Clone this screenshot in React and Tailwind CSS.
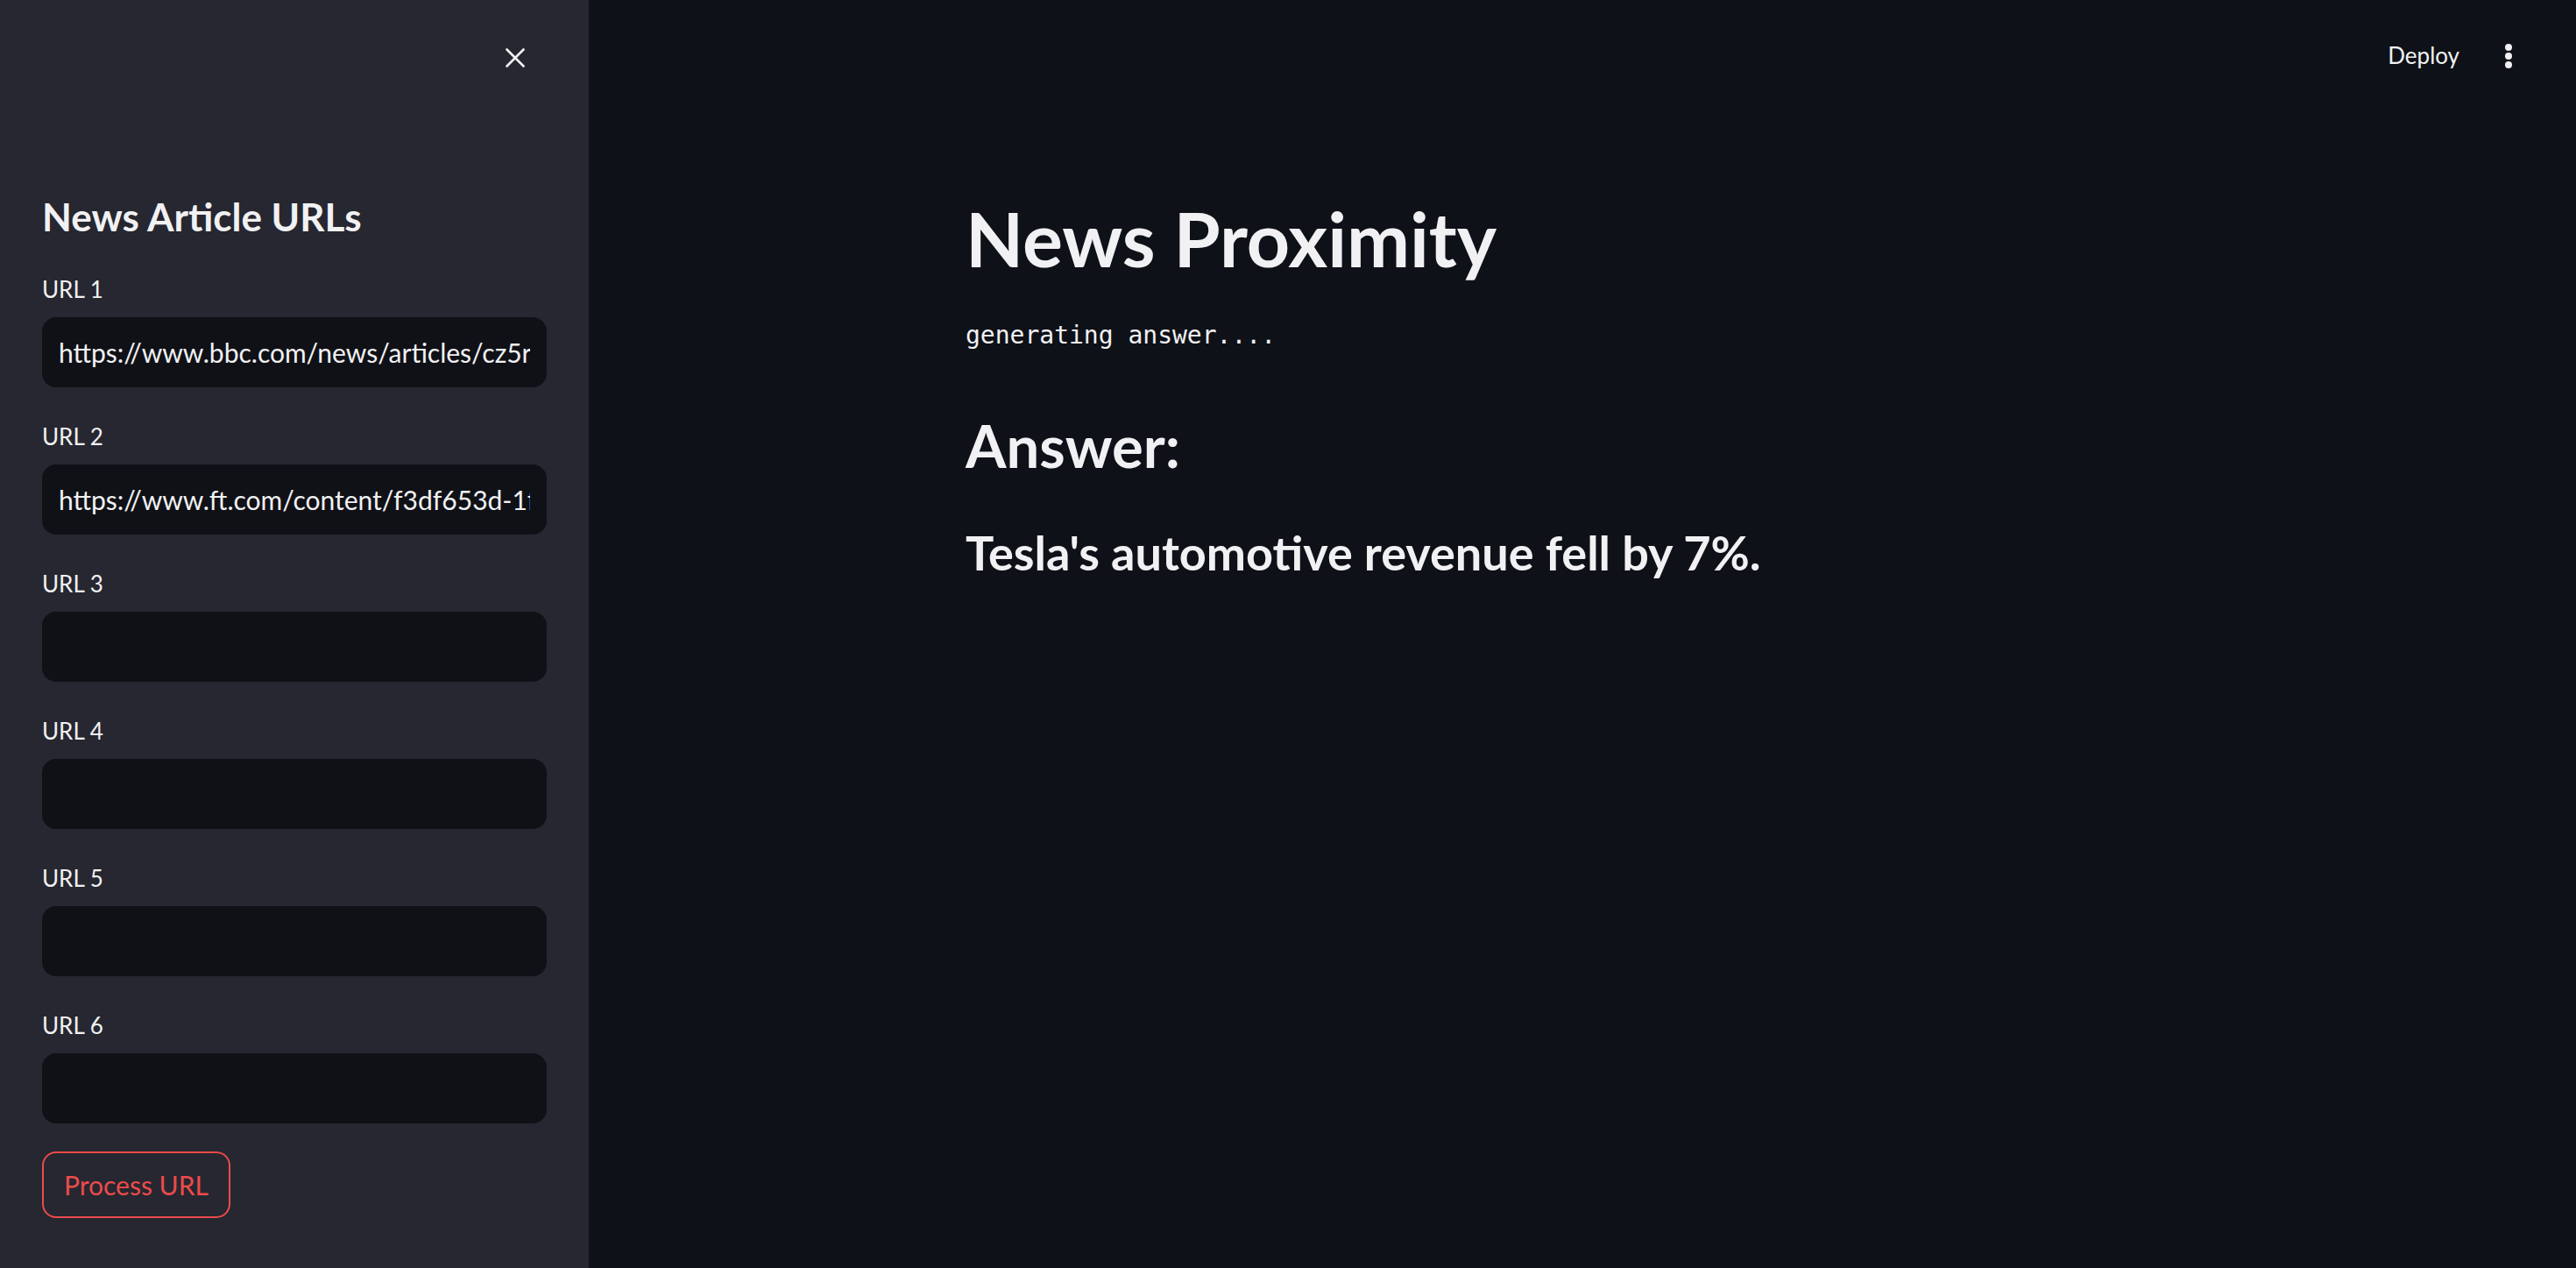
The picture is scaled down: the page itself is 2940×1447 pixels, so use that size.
import React from "react";

const sans = { fontFamily: "Lato, 'Liberation Sans', sans-serif" };

function UrlField({ label, value }) {
  return (
    <div className="flex flex-col">
      <div className="h-[32px] leading-[32px] text-[26px] text-[#f1f1f3]">{label}</div>
      <div className="mt-[16px] h-[80px] rounded-[16px] bg-[#101117] flex items-center px-[19px] overflow-hidden">
        <input
          readOnly
          value={value}
          className="w-full bg-transparent outline-none border-0 text-[30px] text-[#f1f1f3] p-0"
          style={sans}
        />
      </div>
    </div>
  );
}

export default function App() {
  const urls = [
    "https://www.bbc.com/news/articles/cz5rnd4vn9xo",
    "https://www.ft.com/content/f3df653d-1f0b-4e5b-8a55-2c4d7b1a9e61",
    "",
    "",
    "",
    "",
  ];
  return (
    <div className="flex h-screen w-full overflow-hidden bg-[#0e1117]" style={sans}>
      <aside className="w-[672px] shrink-0 bg-[#262730] flex flex-col px-[48px]">
        <div className="pt-[44px] h-[88px] flex justify-end -mr-[48px] pr-[62px]">
          <div className="w-[44px] h-[44px] flex items-center justify-center">
            <svg width="22" height="22" viewBox="0 0 22 22">
              <path d="M1.5 1.5 L20.5 20.5 M20.5 1.5 L1.5 20.5" stroke="#f1f1f3" strokeWidth="2.6" strokeLinecap="round" />
            </svg>
          </div>
        </div>
        <h2 className="mt-[130px] h-[58px] leading-[58px] text-[44px] font-bold text-[#f1f1f3]">News Article URLs</h2>
        <div className="mt-[38px] flex flex-col gap-[40px]">
          {urls.map((u, i) => (
            <UrlField key={i} label={`URL ${i + 1}`} value={u} />
          ))}
        </div>
        <div className="mt-[32px]">
          <button className="h-[76px] px-[23px] rounded-[16px] border-2 border-[#ec4b4b] text-[#ec4b4b] text-[30px] bg-transparent" style={sans}>
            Process URL
          </button>
        </div>
      </aside>
      <main className="flex-1 flex flex-col">
        <div className="h-[127px] flex items-center justify-end pr-[57px]">
          <span className="text-[26px] text-[#f1f1f3] mr-[36px]">Deploy</span>
          <div className="w-[40px] h-[40px] flex items-center justify-center">
            <svg width="10" height="30" viewBox="0 0 10 30">
              <circle cx="5" cy="5" r="4" fill="#f1f1f3" />
              <circle cx="5" cy="15" r="4" fill="#f1f1f3" />
              <circle cx="5" cy="25" r="4" fill="#f1f1f3" />
            </svg>
          </div>
        </div>
        <div className="w-[1472px] mx-auto px-[32px] flex flex-col">
          <h1 className="mt-[93px] h-[104px] leading-[104px] text-[86px] font-bold text-[#f1f1f3]">News Proximity</h1>
          <div
            className="mt-[39px] h-[40px] leading-[40px] text-[28px] text-[#f1f1f3]"
            style={{ fontFamily: "'DejaVu Sans Mono', 'Liberation Mono', monospace" }}
          >
            generating answer....
          </div>
          <h2 className="mt-[65px] h-[80px] leading-[80px] text-[67px] font-bold text-[#f1f1f3]">Answer:</h2>
          <h3 className="mt-[51px] h-[64px] leading-[64px] text-[54px] font-bold text-[#f1f1f3]">
            Tesla's automotive revenue fell by 7%.
          </h3>
        </div>
      </main>
    </div>
  );
}
